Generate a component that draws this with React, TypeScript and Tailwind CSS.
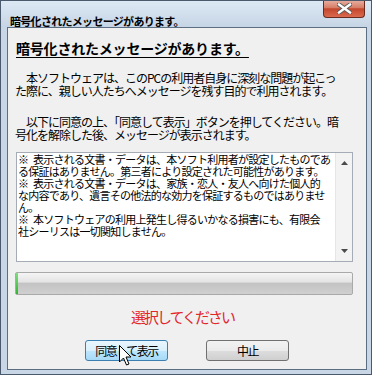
export default function App() {
  const btnBase =
    'w-[83px] h-[21px] rounded-[3px] border flex items-center justify-center text-[12px] leading-[14px] tracking-[-1.5px] text-black'
  const ws = '\u3000'
  const mark = '※\u2002'

  return (
    <div className="relative w-[372px] h-[375px] overflow-hidden border border-[#4a5a6c] bg-[#c8d6e5] pl-[6px] pr-[4px] flex flex-col font-['Noto_Sans_CJK_JP','Noto_Sans',sans-serif]">
      {/* title bar */}
      <div className="-ml-[6px] -mr-[4px] h-[26px] bg-[linear-gradient(to_bottom,#dde8f4,#c6d5e5)] pl-[9px] pt-[6px]">
        <span className="text-[11px] leading-[16px] font-bold tracking-[-0.7px] text-black">
          暗号化されたメッセージがあります。
        </span>
      </div>
      <div className="absolute -top-px right-[6px] w-[42px] h-[18px] rounded-b-[4px] border border-t-0 border-[#6a2b1f] bg-[linear-gradient(to_bottom,#e8b2a4_0%,#d67e67_45%,#c3462c_52%,#da6a4e_100%)] flex items-center justify-center">
        <svg width="15" height="11" viewBox="0 0 15 11">
          <path
            d="M2 1.5 L13 9.5 M13 1.5 L2 9.5"
            stroke="#5a5a5a"
            strokeWidth="4.2"
            strokeLinecap="square"
          />
          <path
            d="M2 1.5 L13 9.5 M13 1.5 L2 9.5"
            stroke="#ffffff"
            strokeWidth="2.4"
            strokeLinecap="square"
          />
        </svg>
      </div>

      {/* client area */}
      <div className="h-[343px] border border-[#5c6e82] bg-[#f0f0f0] flex flex-col text-black">
        <h1 className="ml-[8px] mt-[12px] text-[14px] leading-[17px] font-bold underline underline-offset-[3px] tracking-[-0.2px] whitespace-nowrap">
          暗号化されたメッセージがあります。
        </h1>

        <p className="ml-[7px] mt-[14px] text-[12px] leading-[13px] tracking-[-1px] whitespace-pre">
          {ws}本ソフトウェアは、このPCの利用者自身に深刻な問題が起こっ
          <br />
          た際に、親しい人たちへメッセージを残す目的で利用されます。
        </p>
        <p className="ml-[7px] mt-[18px] text-[12px] leading-[13px] tracking-[-1px] whitespace-pre">
          {ws}以下に同意の上、「同意して表示」ボタンを押してください。暗
          <br />
          号化を解除した後、メッセージが表示されます。
        </p>

        {/* notice box */}
        <div className="ml-[8px] mt-[11px] w-[337px] h-[110px] border border-[#a5acb5] bg-white flex">
          <div className="flex-1 pl-[1px] text-[11px] leading-[12px] tracking-[-0.75px] whitespace-pre">
            <div>{mark}表示される文書・データは、本ソフト利用者が設定したものであ</div>
            <div>る保証はありません。第三者により設定された可能性があります。</div>
            <div>{mark}表示される文書・データは、家族・恋人・友人へ向けた個人的</div>
            <div>な内容であり、遺言その他法的な効力を保証するものではありませ</div>
            <div>ん。</div>
            <div>{mark}本ソフトウェアの利用上発生し得るいかなる損害にも、有限会</div>
            <div>社シーリスは一切関知しません。</div>
          </div>
          <div className="w-[17px] bg-[#f3f3f3] border-l border-[#e6e6e6] flex flex-col items-center justify-between py-[8px]">
            <svg width="7" height="4" viewBox="0 0 7 4">
              <path d="M0 4 L3.5 0 L7 4 Z" fill="#4a4a4a" />
            </svg>
            <svg width="7" height="4" viewBox="0 0 7 4">
              <path d="M0 0 L3.5 4 L7 0 Z" fill="#4a4a4a" />
            </svg>
          </div>
        </div>

        {/* progress bar */}
        <div className="ml-[7px] mt-[10px] w-[338px] h-[23px] rounded-[2px] border border-[#a9a9a9] bg-[linear-gradient(to_bottom,#f5f5f5_0%,#e4e4e4_42%,#c3c3c3_50%,#d0d0d0_100%)] flex">
          <div className="w-[2px] bg-[linear-gradient(to_bottom,#7fe07f,#32b532)]" />
        </div>

        <div className="mt-[13px] pl-[8px] pr-[17px] flex justify-center text-[15px] leading-[18px] tracking-[-2px] text-[#e3262a]">
          選択してください
        </div>

        <div className="mt-[14px] pl-[77px] flex gap-[38px]">
          <div
            className={`${btnBase} border-[#3c7fb1] bg-[linear-gradient(to_bottom,#eaf6fd_0%,#d9f0fc_50%,#bee6fd_51%,#a7d9f5_100%)]`}
          >
            同意して表示
          </div>
          <div
            className={`${btnBase} border-[#707070] bg-[linear-gradient(to_bottom,#f2f2f2_0%,#ebebeb_50%,#dddddd_51%,#cfcfcf_100%)]`}
          >
            中止
          </div>
        </div>
      </div>

      {/* mouse pointer */}
      <svg
        className="absolute left-[118px] top-[344px]"
        width="13"
        height="22"
        viewBox="0 0 13 22"
      >
        <path
          d="M0.5 0.5 L0.5 17 L4.5 13 L7.5 20 L10 19 L7 12 L12 12 Z"
          fill="#ffffff"
          stroke="#000000"
          strokeWidth="1"
          strokeLinejoin="miter"
        />
      </svg>
    </div>
  )
}
